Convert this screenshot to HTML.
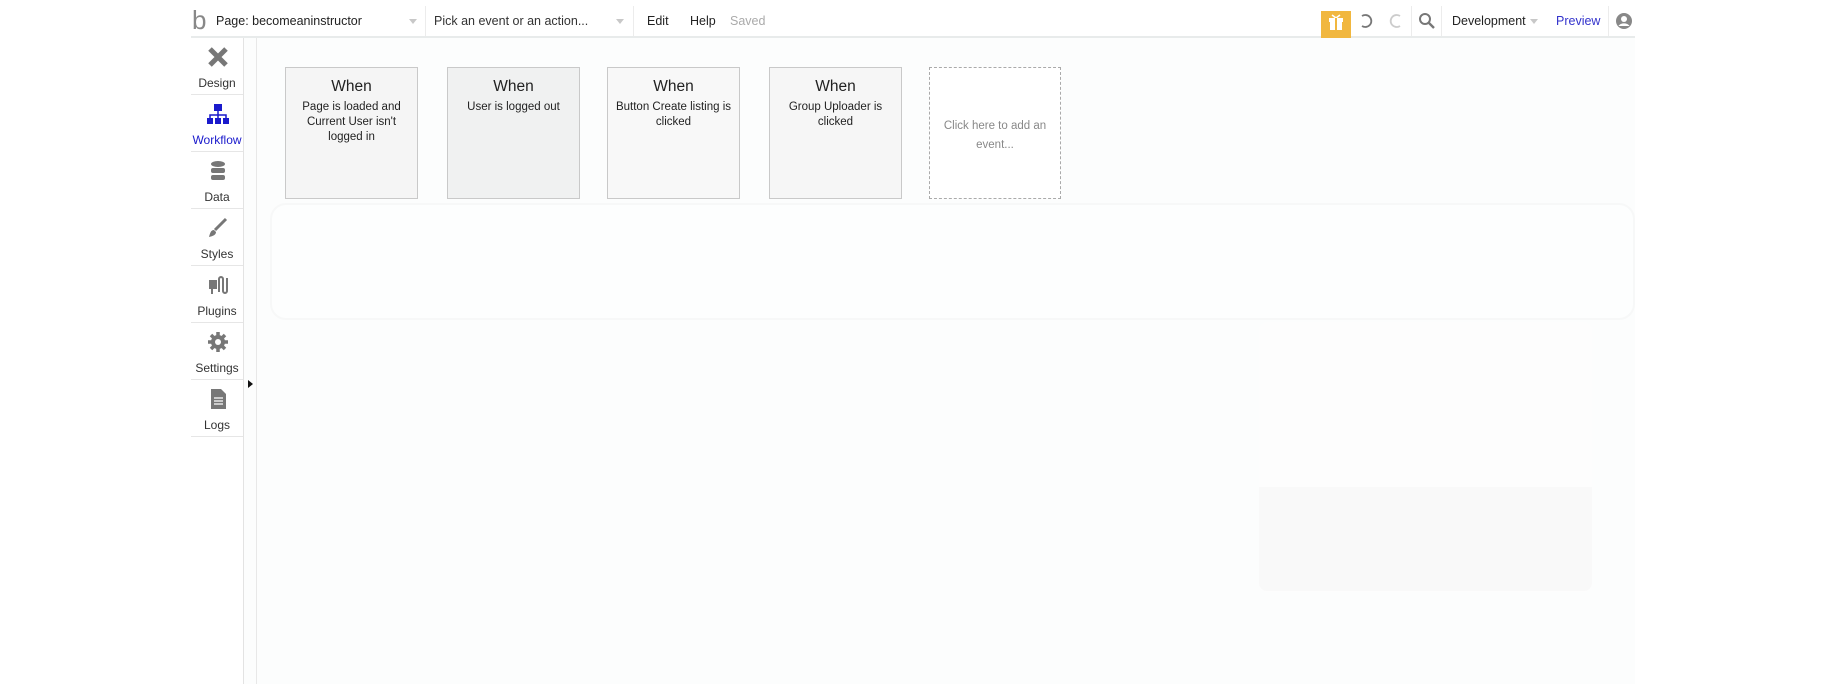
<!DOCTYPE html>
<html><head><meta charset="utf-8"><style>
*{margin:0;padding:0;box-sizing:border-box}
body{width:1830px;height:690px;background:#fff;font-family:"Liberation Sans",sans-serif;position:relative;overflow:hidden;color:#222}
.a{position:absolute}
.t{font-size:12.5px;white-space:nowrap}
.card{position:absolute;top:67px;width:133px;height:132px;border:1px solid #c9c9c9;text-align:center}
.card .w{font-size:15.5px;margin-top:10px;color:#222}
.card .d{font-size:11.5px;line-height:15px;margin-top:4px;padding:0 3px;color:#222}
.side{position:absolute;left:191px;width:52px;height:57px;text-align:center;border-bottom:1px solid #e6e6e6}
.side .l{position:absolute;left:0;right:0;top:38px;font-size:12px;color:#333}
.side svg{position:absolute;left:16px;top:8px}
</style></head><body>
<div class="a" style="left:191px;top:38px;width:1444px;height:646px;background:#fcfdfd"></div>
<div class="a" style="left:191px;top:0;width:1444px;height:38px;background:#fff;border-bottom:2px solid #e8ebeb"></div>
<div class="a" style="left:192px;top:5px;font-size:26px;color:#888;line-height:30px">b</div>
<div class="a t" style="left:216px;top:14px;color:#222">Page: becomeaninstructor</div>
<div class="a" style="left:409px;top:19px;border:4px solid transparent;border-top:5px solid #c8c8c8"></div>
<div class="a" style="left:425px;top:6px;width:1px;height:30px;background:#ececec"></div>
<div class="a t" style="left:434px;top:14px;color:#333">Pick an event or an action...</div>
<div class="a" style="left:616px;top:19px;border:4px solid transparent;border-top:5px solid #c8c8c8"></div>
<div class="a" style="left:633px;top:6px;width:1px;height:30px;background:#ececec"></div>
<div class="a t" style="left:647px;top:14px">Edit</div>
<div class="a t" style="left:690px;top:14px">Help</div>
<div class="a t" style="left:730px;top:14px;color:#aaa">Saved</div>
<div class="a" style="left:1321px;top:11px;width:30px;height:27px;background:#f1b73f"></div>
<svg class="a" style="left:1326px;top:13px" width="20" height="20" viewBox="0 0 20 20"><path d="M6 2l4 3 4-3" stroke="#fff" stroke-width="1.5" fill="none"/><rect x="3" y="5" width="14" height="4" fill="#fff"/><rect x="4" y="9" width="12" height="8" fill="#fff"/><rect x="9" y="5" width="2" height="12" fill="#f1b73f"/></svg>
<svg class="a" style="left:1356px;top:11px" width="20" height="20" viewBox="0 0 20 20"><path d="M6 5a6 6 0 1 1 0 10" stroke="#777" stroke-width="1.8" fill="none"/></svg>
<svg class="a" style="left:1386px;top:11px" width="20" height="20" viewBox="0 0 20 20"><path d="M14 5a6 6 0 1 0 0 10" stroke="#ccc" stroke-width="1.8" fill="none"/></svg>
<div class="a" style="left:1411px;top:6px;width:1px;height:30px;background:#ececec"></div>
<svg class="a" style="left:1418px;top:12px" width="18" height="18" viewBox="0 0 18 18"><circle cx="7" cy="7" r="5" stroke="#777" stroke-width="2" fill="none"/><path d="M11 11l5 5" stroke="#777" stroke-width="2.4"/></svg>
<div class="a" style="left:1441px;top:6px;width:1px;height:30px;background:#ececec"></div>
<div class="a t" style="left:1452px;top:14px">Development</div>
<div class="a" style="left:1530px;top:19px;border:4px solid transparent;border-top:5px solid #c8c8c8"></div>
<div class="a t" style="left:1556px;top:14px;color:#3333cc">Preview</div>
<div class="a" style="left:1608px;top:6px;width:1px;height:30px;background:#ececec"></div>
<svg class="a" style="left:1615px;top:12px" width="18" height="18" viewBox="0 0 18 18"><circle cx="9" cy="9" r="8" fill="#888"/><circle cx="9" cy="7" r="3" fill="#fff"/><path d="M3.5 14c2-3.5 9-3.5 11 0" fill="#fff"/></svg>
<div class="a" style="left:191px;top:38px;width:52px;height:646px;background:#fff"></div>
<div class="a" style="left:243px;top:38px;width:1px;height:646px;background:#e3e3e3"></div>
<div class="a" style="left:256px;top:38px;width:1px;height:646px;background:#e8e8e8"></div>
<div class="side" style="top:38px"><svg width="22" height="22" viewBox="0 0 22 22"><path d="M3 3l16 16M19 3L3 19" stroke="#777" stroke-width="5"/></svg><div class="l">Design</div></div>
<div class="side" style="top:95px"><svg width="22" height="22" viewBox="0 0 22 22"><rect x="7" y="1" width="8" height="7" fill="#1a1acc"/><path d="M11 8v4M3 15v-3h16v3M11 12v3" stroke="#1a1acc" stroke-width="1.5" fill="none"/><rect x="0" y="15" width="6" height="6" fill="#1a1acc"/><rect x="8" y="15" width="6" height="6" fill="#1a1acc"/><rect x="16" y="15" width="6" height="6" fill="#1a1acc"/></svg><div class="l" style="color:#1a1acc">Workflow</div></div>
<div class="side" style="top:152px"><svg width="22" height="22" viewBox="0 0 22 22"><ellipse cx="11" cy="4" rx="7" ry="3" fill="#777"/><rect x="4" y="8" width="14" height="5" rx="2" fill="#777"/><rect x="4" y="15" width="14" height="5" rx="2" fill="#777"/></svg><div class="l">Data</div></div>
<div class="side" style="top:209px"><svg width="22" height="22" viewBox="0 0 22 22"><path d="M19 2L8 13" stroke="#777" stroke-width="3"/><path d="M7 13c-3 0-4 3-5 7 4-1 7-2 7-5z" fill="#777"/></svg><div class="l">Styles</div></div>
<div class="side" style="top:266px"><svg width="22" height="22" viewBox="0 0 22 22"><rect x="2" y="6" width="8" height="9" fill="#777"/><path d="M5 15v5M12 18V5a2 2 0 0 1 4 0v12a2 2 0 0 0 4 0V4" stroke="#777" stroke-width="2" fill="none"/></svg><div class="l">Plugins</div></div>
<div class="side" style="top:323px"><svg width="22" height="22" viewBox="0 0 22 22"><circle cx="11" cy="11" r="7" fill="#777"/><path d="M11 1v20M1 11h20M4 4l14 14M18 4L4 18" stroke="#777" stroke-width="3.5"/><circle cx="11" cy="11" r="3" fill="#fff"/></svg><div class="l">Settings</div></div>
<div class="side" style="top:380px"><svg width="22" height="22" viewBox="0 0 22 22"><path d="M4 1h10l5 5v15H4z" fill="#777"/><path d="M7 10h9M7 13h9M7 16h9" stroke="#fff" stroke-width="1.3"/></svg><div class="l">Logs</div></div>
<div class="a" style="left:248px;top:380px;border:4px solid transparent;border-left:5px solid #111"></div>
<div class="card" style="left:285px;background:#f5f5f5"><div class="w">When</div><div class="d">Page is loaded and Current User isn't logged in</div></div>
<div class="card" style="left:447px;background:#f0f1f1"><div class="w">When</div><div class="d">User is logged out</div></div>
<div class="card" style="left:607px;background:#f8f8f8"><div class="w">When</div><div class="d">Button Create listing is clicked</div></div>
<div class="card" style="left:769px;background:#f6f6f6"><div class="w">When</div><div class="d">Group Uploader is clicked</div></div>
<div class="card" style="left:929px;width:132px;border:1px dashed #aaa;background:#fff"><div class="d" style="margin-top:49px;color:#888;line-height:19px">Click here to add an event...</div></div>
<div class="a" style="left:270px;top:203px;width:1365px;height:117px;border:2px solid #f7f8f8;border-radius:16px;background:#fdfefe"></div>
<div class="a" style="left:1259px;top:322px;width:333px;height:270px;border-radius:8px;background:#fdfdfd"></div>
<div class="a" style="left:1259px;top:487px;width:333px;height:104px;border-radius:0 0 8px 8px;background:#f9f9f9"></div>
</body></html>
